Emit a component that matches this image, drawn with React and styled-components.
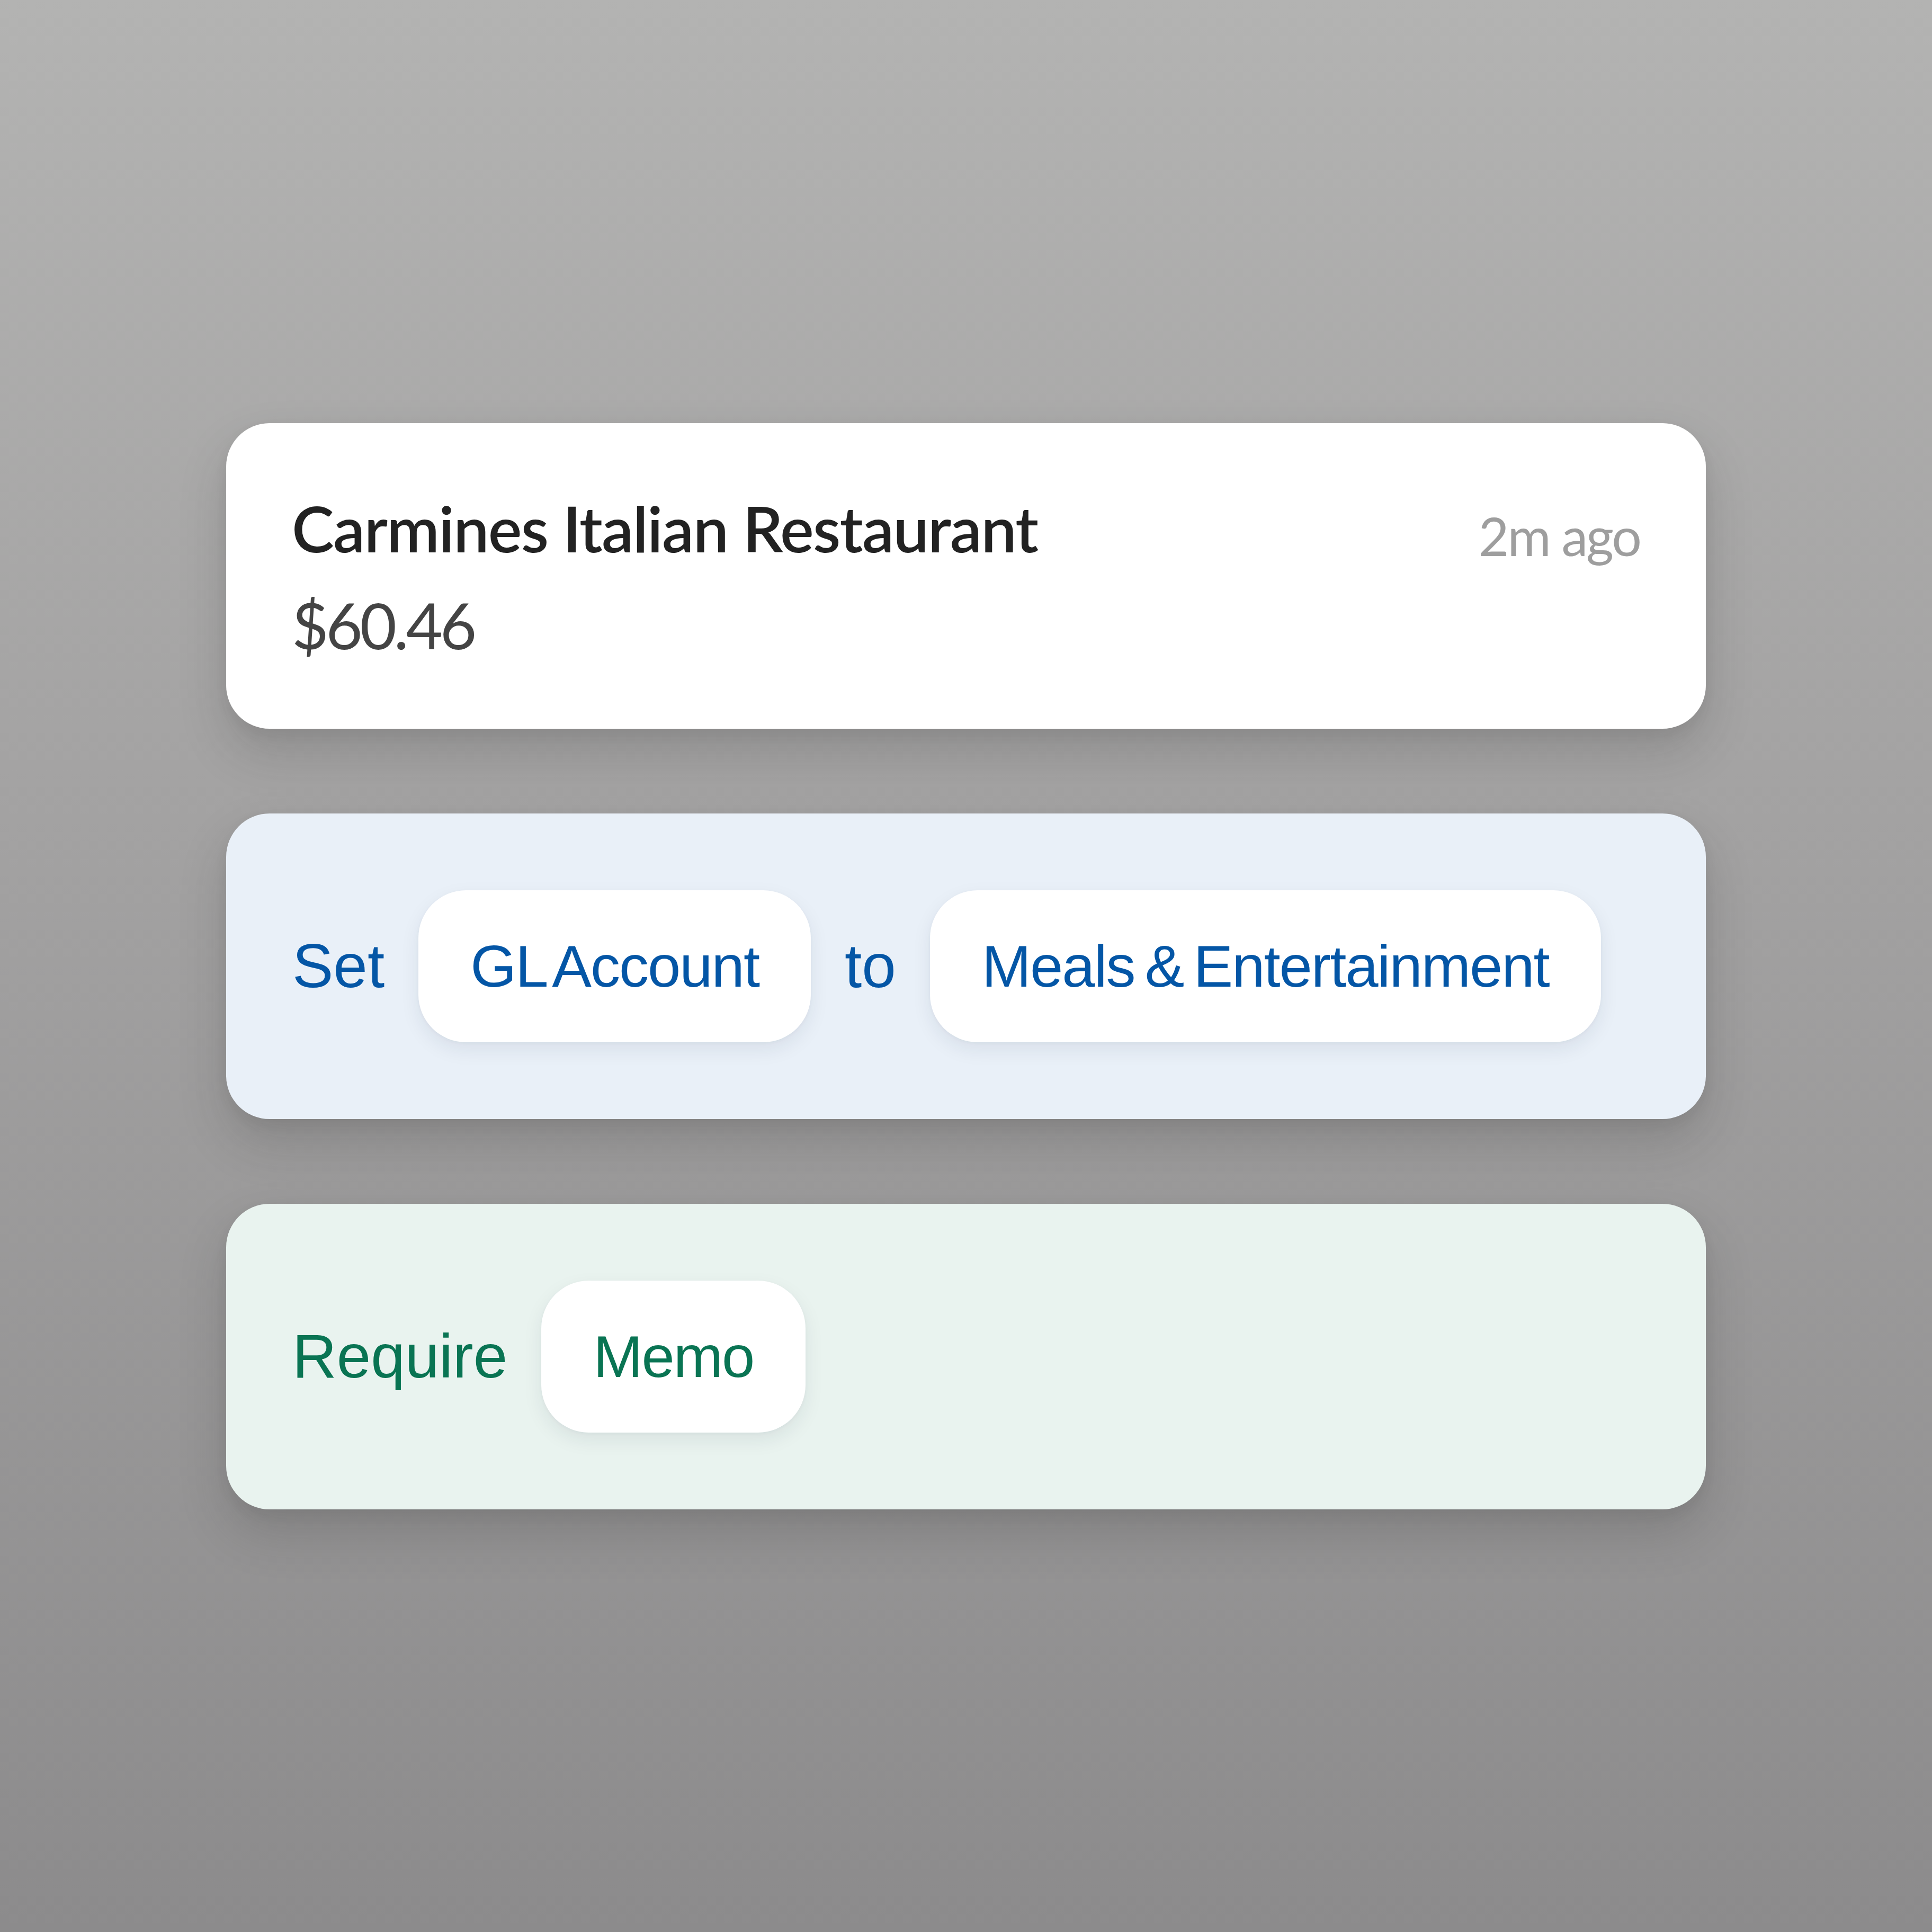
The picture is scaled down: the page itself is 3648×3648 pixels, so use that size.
import React from "react";
import styled, { createGlobalStyle } from "styled-components";

const GlobalStyle = createGlobalStyle`
  html, body {
    margin: 0;
    padding: 0;
  }
  body {
    font-family: "Liberation Sans", Arial, sans-serif;
  }
`;

const tones = {
  plain: { bg: "#ffffff", fg: "#222222" },
  blue: { bg: "#e9f0f8", fg: "#0456a6" },
  green: { bg: "#e9f3ef", fg: "#097453" },
};

function App() {
  return (
    <Page>
      <GlobalStyle />
      <Stack>
        <Card tone="plain">
          <Info>
            <Merchant>Carmines Italian Restaurant</Merchant>
            <Amount>$60.46</Amount>
          </Info>
          <Time>2m ago</Time>
        </Card>

        <Card tone="blue" $rule>
          <Word>Set</Word>
          <Pill>GL Account</Pill>
          <Word>to</Word>
          <Pill>Meals &amp; Entertainment</Pill>
        </Card>

        <Card tone="green" $rule>
          <Word>Require</Word>
          <Pill>Memo</Pill>
        </Card>
      </Stack>
    </Page>
  );
}

export default App;

const Page = styled.div`
  width: 3648px;
  height: 3648px;
  display: flex;
  align-items: center;
  justify-content: center;
  background: linear-gradient(180deg, #b3b3b2 0%, #a4a3a3 40%, #8c8b8c 100%);
`;

const Stack = styled.div`
  width: 2794px;
  display: flex;
  flex-direction: column;
  gap: 160px;
`;

const Card = styled.div`
  box-sizing: border-box;
  height: 577px;
  border-radius: 82px;
  background-color: ${(p) => tones[p.tone].bg};
  color: ${(p) => tones[p.tone].fg};
  box-shadow: 0 44px 90px rgba(40, 40, 40, 0.18), 0 10px 24px rgba(40, 40, 40, 0.06);
  display: flex;
  align-items: ${(p) => (p.$rule ? "center" : "flex-start")};
  justify-content: ${(p) => (p.$rule ? "flex-start" : "space-between")};
  gap: ${(p) => (p.$rule ? "64px" : "0")};
  padding: ${(p) => (p.$rule ? "0 125px" : "126px 124px 124px 124px")};
`;

const Info = styled.div`
  display: flex;
  flex-direction: column;
  gap: 39px;
`;

const Merchant = styled.div`
  font-family: Lato, "Noto Sans", sans-serif;
  font-weight: 600;
  font-size: 120px;
  line-height: 144px;
  color: #222222;
  letter-spacing: -1.7px;
`;

const Amount = styled.div`
  font-family: Lato, "Noto Sans", sans-serif;
  font-weight: 400;
  font-size: 120px;
  line-height: 144px;
  color: #444444;
  letter-spacing: -5.4px;
`;

const Time = styled.div`
  font-family: Lato, "Noto Sans", sans-serif;
  font-size: 100px;
  line-height: 120px;
  color: #9e9e9e;
  letter-spacing: -3px;
  margin-top: 26px;
`;

const Word = styled.span`
  font-size: 116px;
  line-height: 1;
`;

const Pill = styled.span`
  box-sizing: border-box;
  height: 287px;
  padding: 0 98px;
  display: inline-flex;
  align-items: center;
  border-radius: 90px;
  background: #ffffff;
  font-size: 112px;
  letter-spacing: -2px;
  word-spacing: -10px;
  white-space: nowrap;
  box-shadow: 0 14px 36px rgba(20, 40, 70, 0.08), 0 2px 6px rgba(20, 40, 70, 0.04);
`;
